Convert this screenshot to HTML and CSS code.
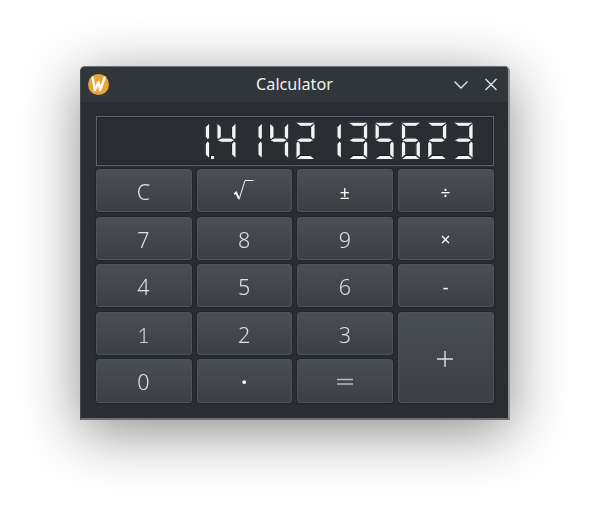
FILE: index.html
```html
<!DOCTYPE html>
<html lang="en">
<head>
<meta charset="utf-8">
<title>Calculator</title>
<link rel="stylesheet" href="styles.css">
</head>
<body>
<main class="window">
  <header class="titlebar">
    <svg class="logo" viewBox="0 0 22 22"><circle cx="11" cy="11" r="11"/><path d="M4.8 3.6L7.2 17L11 8.2L12.8 17L17.6 3.6"/></svg>
    <h1 class="title">Calculator</h1>
    <svg class="control" viewBox="0 0 16 16"><path d="M1.5 4.5L8 11L14.5 4.5"/></svg>
    <svg class="control" viewBox="0 0 16 16"><path d="M2.5 2L13.5 13M13.5 2L2.5 13"/></svg>
  </header>
  <section class="body">
    <div class="display" role="img" aria-label="1.4142135623">
      <span class="digit"><i class="b"></i><i class="c"></i><i class="point"></i></span>
      <span class="digit"><i class="f"></i><i class="g"></i><i class="b"></i><i class="c"></i></span>
      <span class="digit"><i class="b"></i><i class="c"></i></span>
      <span class="digit"><i class="f"></i><i class="g"></i><i class="b"></i><i class="c"></i></span>
      <span class="digit"><i class="a"></i><i class="b"></i><i class="g"></i><i class="e"></i><i class="d"></i></span>
      <span class="digit"><i class="b"></i><i class="c"></i></span>
      <span class="digit"><i class="a"></i><i class="b"></i><i class="g"></i><i class="c"></i><i class="d"></i></span>
      <span class="digit"><i class="a"></i><i class="f"></i><i class="g"></i><i class="c"></i><i class="d"></i></span>
      <span class="digit"><i class="a"></i><i class="f"></i><i class="g"></i><i class="e"></i><i class="c"></i><i class="d"></i></span>
      <span class="digit"><i class="a"></i><i class="b"></i><i class="g"></i><i class="e"></i><i class="d"></i></span>
      <span class="digit"><i class="a"></i><i class="b"></i><i class="g"></i><i class="c"></i><i class="d"></i></span>
    </div>
    <div class="keys">
      <button>C</button>
      <button aria-label="Square root"><svg class="root" viewBox="0 0 22 22"><path class="thin" d="M6 20.5L12 1.5H20.5"/><path class="thick" d="M1.3 15.2L3.2 13.6L5.8 19.5"/></svg></button>
      <button class="op">±</button>
      <button class="op">÷</button>
      <button>7</button><button>8</button><button>9</button><button class="op">×</button>
      <button>4</button><button>5</button><button>6</button><button class="op">-</button>
      <button class="slab">1</button><button>2</button><button>3</button><button class="plus"><svg class="sign" viewBox="0 0 16 16"><path d="M0 8H16M8 0V16"/></svg></button>
      <button>0</button><button class="dot">·</button><button aria-label="Equals"><svg class="sign equals" viewBox="0 0 16 16"><path d="M0 5.5H16M0 10H16"/></svg></button>
    </div>
  </section>
</main>
</body>
</html>
```
FILE: styles.css
```css
* { box-sizing: border-box; }
body {
  margin: 0;
  padding: 66px 0 0 80px;
  width: 589px;
  height: 513px;
  overflow: hidden;
  background: #fff;
  font-family: "Noto Sans", sans-serif;
}
.window {
  width: 430px;
  height: 354px;
  background: #2a2e32;
  border: 1px solid #6c7175;
  border-right: 2px solid #929699;
  border-bottom: 2px solid #6d7276;
  border-left-color: #45494d;
  border-radius: 5px 5px 0 0;
  box-shadow: 0 12px 58px rgba(0, 0, 0, .46);
}
.titlebar {
  display: flex;
  align-items: center;
  height: 35px;
  padding: 0 9px 0 7px;
  gap: 14px;
  background: #31363a;
  border-radius: 4px 4px 0 0;
}
.logo { width: 21px; height: 21px; }
.logo circle { fill: #e9a637; }
.logo path { fill: none; stroke: #fff; stroke-width: 2.4; stroke-linejoin: round; stroke-linecap: round; }
.title {
  flex: 1;
  margin: 0;
  padding: 0 0 2px 27px;
  color: #eff0f1;
  font-size: 16.2px;
  font-weight: 400;
  line-height: 22px;
  text-align: center;
}
.control { width: 16px; height: 16px; fill: none; stroke: #e4e5e6; stroke-width: 1.4; }
.body { padding: 14px 14px 14px 15px; }
.display {
  display: flex;
  justify-content: flex-end;
  gap: 4.35px;
  width: 398px;
  height: 50px;
  padding: 4px 18.5px 0 0;
  border: 1px solid #5d666e;
  outline: 1px solid #202326;
  outline-offset: -2px;
}
.digit {
  display: grid;
  width: 22px;
  height: 40px;
  filter: drop-shadow(-1px -1px 0 #15181a) drop-shadow(.6px .8px .3px #75828b);
}
.digit i { grid-area: 1 / 1; background: #f2f3f3; }
.a { clip-path: polygon(2px 1.8px, 20px 1.8px, 16px 4.8px, 6px 4.8px); }
.b { clip-path: polygon(20px 3px, 20px 17px, 18.5px 18px, 16.7px 15.5px, 16.7px 6px); }
.c { clip-path: polygon(20px 22px, 20px 36.5px, 16.7px 33.5px, 16.7px 23px, 18.5px 20.5px); }
.d { clip-path: polygon(6px 34.9px, 16px 34.9px, 19.5px 38px, 2.5px 38px); }
.e { clip-path: polygon(2px 22px, 3.5px 20.5px, 5.3px 23px, 5.3px 33.5px, 2px 36.5px); }
.f { clip-path: polygon(2px 3px, 5.3px 6px, 5.3px 15.5px, 3.5px 18px, 2px 17px); }
.g { clip-path: polygon(2.5px 19.2px, 6px 17.6px, 15.5px 17.6px, 18.5px 19.2px, 15.5px 20.8px, 6px 20.8px); }
.point { margin: 35px -3px 2px 22px; width: 3px; height: 3px; }
.keys {
  display: grid;
  grid-template: repeat(5, 43.2px) / repeat(4, 95.8px);
  gap: 4.4px 4.9px;
  margin-top: 3px;
  will-change: opacity;
}
button {
  display: flex;
  align-items: center;
  justify-content: center;
  padding: 3px 1px 0 0;
  border: 1px solid #4f5458;
  border-radius: 3px;
  background: linear-gradient(#4a4f53, #3c3f43);
  box-shadow: 0 0 1px 1px #222629;
  color: #dfe0e1;
  font: 300 21.5px/30px "Noto Sans", sans-serif;
}
.slab { font-family: Lato, sans-serif; }
.op { font-size: 17.5px; font-weight: 400; color: #fff; padding-top: 2px; }
.dot { font-size: 21px; font-weight: 700; color: #fff; padding-top: 2px; }
.plus { grid-row: span 2; }
.root { width: 22px; height: 22px; margin-top: -4px; fill: none; stroke: #f4f4f4; }
.thin { stroke-width: 1; }
.thick { stroke-width: 2; }
.sign { width: 16px; height: 16px; fill: none; stroke: #dcdddf; stroke-width: 1.4; }
.equals { stroke: #b9bbbd; }
```
